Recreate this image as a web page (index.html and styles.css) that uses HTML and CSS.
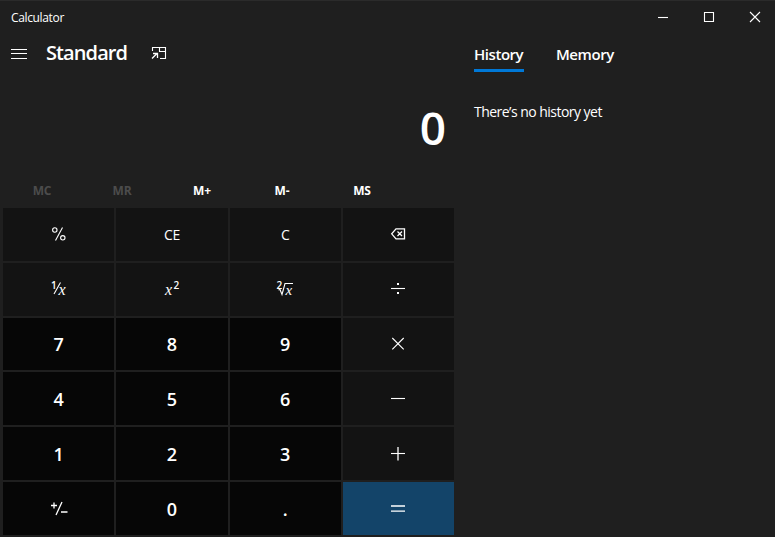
FILE: index.html
```html
<!DOCTYPE html>
<html lang="en">
<head>
<meta charset="utf-8">
<title>Calculator</title>
<link rel="stylesheet" href="styles.css">
</head>
<body>
<div class="window">
  <header class="titlebar">
    <span class="app-name">Calculator</span>
    <div class="window-controls">
      <svg width="46" height="34"><path d="M18 17.5h10"/></svg>
      <svg width="46" height="34"><path d="M18.5 12.5h9v9h-9z"/></svg>
      <svg width="46" height="34"><path d="M18 12l10 10M28 12l-10 10"/></svg>
    </div>
  </header>
  <div class="content">
    <main class="calculator">
      <div class="mode">
        <svg class="menu" width="16" height="12"><path d="M0 2.5h16M0 6.5h16M0 11.5h16"/></svg>
        <h1>Standard</h1>
        <svg class="on-top" width="16" height="14"><path d="M1.500 5V1.500h13v11H9M8.500 1.500v4h6"/><path class="bold" d="M1 12.500l5-5M2 7.500h4.500v4.500"/></svg>
      </div>
      <output class="display">0</output>
      <div class="memory-keys">
        <span class="off">MC</span><span class="off">MR</span><span>M+</span><span>M-</span><span>MS</span>
      </div>
      <div class="keypad">
        <button><svg width="24" height="24"><circle cx="7.800" cy="8" r="2.200"/><circle cx="15.800" cy="15.800" r="2.200"/><path d="M15.500 5.500L8.500 18.500"/></svg></button>
        <button class="label">CE</button>
        <button class="label">C</button>
        <button><svg class="bold" width="24" height="24"><path d="M10 6.800h8.500v10H10l-4.300-5zM11.500 9.500l4.500 4.500M16 9.500l-4.500 4.500"/></svg></button>

        <button><svg width="24" height="24"><text class="small" x="4" y="11.500">1</text><path d="M13.500 5.500L7 17"/><text class="var" x="11.500" y="17.500">x</text></svg></button>
        <button><svg width="24" height="24"><text class="var" x="5" y="17.500">x</text><text class="small" x="13.500" y="11.500">2</text></svg></button>
        <button><svg width="24" height="24"><text class="small" x="3.500" y="11.500">2</text><path d="M5.500 13l1.500-.5 2 5 3-11h8"/><text class="var root" x="12.500" y="17.500">x</text></svg></button>
        <button><svg width="24" height="24"><path d="M5 11.500h14"/><path class="dots" d="M11 6h2v2h-2zM11 15h2v2h-2z"/></svg></button>

        <button class="digit">7</button>
        <button class="digit">8</button>
        <button class="digit">9</button>
        <button><svg width="24" height="24"><path d="M6.300 6l11.400 11.400M17.700 6L6.300 17.400"/></svg></button>

        <button class="digit">4</button>
        <button class="digit">5</button>
        <button class="digit">6</button>
        <button><svg width="24" height="24"><path d="M5 11.500h14"/></svg></button>

        <button class="digit">1</button>
        <button class="digit">2</button>
        <button class="digit">3</button>
        <button><svg width="24" height="24"><path d="M5 11.500h14"/><path class="bold" d="M12 5v13.500"/></svg></button>

        <button class="digit"><svg class="bold" width="24" height="24"><path d="M4 8.500h6M7 5.500v6M15 5L9 18M14 15h6.500"/></svg></button>
        <button class="digit">0</button>
        <button class="digit">.</button>
        <button class="equals"><svg class="bold" width="24" height="24"><path d="M5 9h14M5 14.200h14"/></svg></button>
      </div>
    </main>
    <aside class="side">
      <nav class="tabs"><span class="tab active">History</span><span class="tab memory">Memory</span></nav>
      <p>There’s no history yet</p>
    </aside>
  </div>
</div>
</body>
</html>
```
FILE: styles.css
```css
* { box-sizing: border-box; }

body {
  margin: 0;
  background: #1f1f1f;
  color: #fff;
  font-family: "Open Sans", "Noto Sans", sans-serif;
}

.window {
  width: 775px;
  height: 537px;
  overflow: hidden;
  border-top: 1px solid #2b2b2b;
}

svg {
  display: block;
  fill: none;
  stroke: #fff;
  stroke-width: 1.1;
}

.bold { stroke-width: 1.3; }

.titlebar {
  display: flex;
  justify-content: space-between;
  height: 33px;
}

.app-name {
  padding: 8px 0 0 11px;
  font-size: 12px;
  line-height: 18px;
  letter-spacing: -.35px;
}

.window-controls {
  display: flex;
  margin: -1px -3px 0 0;
}

.content { display: flex; }

.calculator { width: 456px; }

.mode {
  display: flex;
  align-items: center;
  height: 38px;
  padding-left: 11px;
}

h1 {
  width: 81px;
  margin: 0 24px 0 19px;
  font-size: 20px;
  font-weight: 600;
  line-height: 28px;
  letter-spacing: -.9px;
  white-space: nowrap;
}

.display {
  display: block;
  height: 108px;
  padding: 22px 10px 0 0;
  font-size: 46px;
  font-weight: 600;
  line-height: 66px;
  text-align: right;
}

.memory-keys {
  display: grid;
  grid-template-columns: repeat(5, 80px);
  height: 28px;
  padding-left: 2px;
  font-size: 12px;
  font-weight: 700;
  line-height: 22px;
  letter-spacing: -.2px;
  text-align: center;
}

.off { color: #4c4c4c; }

.keypad {
  display: grid;
  grid-template: repeat(6, 1fr) / repeat(4, 1fr);
  gap: 2px;
  width: 451px;
  height: 327px;
  margin-left: 3px;
}

button {
  display: flex;
  align-items: center;
  justify-content: center;
  min-height: 0;
  padding: 0;
  border: 0;
  background: #131313;
  color: #fff;
  font: 14px/20px "Open Sans", "Noto Sans", sans-serif;
  letter-spacing: -.4px;
}

.label { padding-top: 2px; }

.digit {
  background: #060606;
  font-size: 18px;
  font-weight: 600;
  letter-spacing: 0;
}

.equals { background: #134469; }

.dots { fill: #fff; stroke: none; }

text { fill: #fff; stroke: none; letter-spacing: 0; }

.small {
  font-size: 10px;
  font-weight: 600;
}

.var {
  font-family: "Liberation Serif", serif;
  font-size: 16px;
  font-style: italic;
}

.root { font-size: 15px; }

.side { padding-left: 18px; }

.tabs {
  display: flex;
  gap: 32px;
  height: 38px;
}

.tab {
  width: 50px;
  padding-top: 9px;
  font-size: 15px;
  font-weight: 600;
  line-height: 22px;
  letter-spacing: -.45px;
  white-space: nowrap;
}

.active { border-bottom: 3px solid #0078d7; }

.side p {
  margin: 30px 0 0;
  font-size: 14px;
  line-height: 20px;
  letter-spacing: -.53px;
}
```
